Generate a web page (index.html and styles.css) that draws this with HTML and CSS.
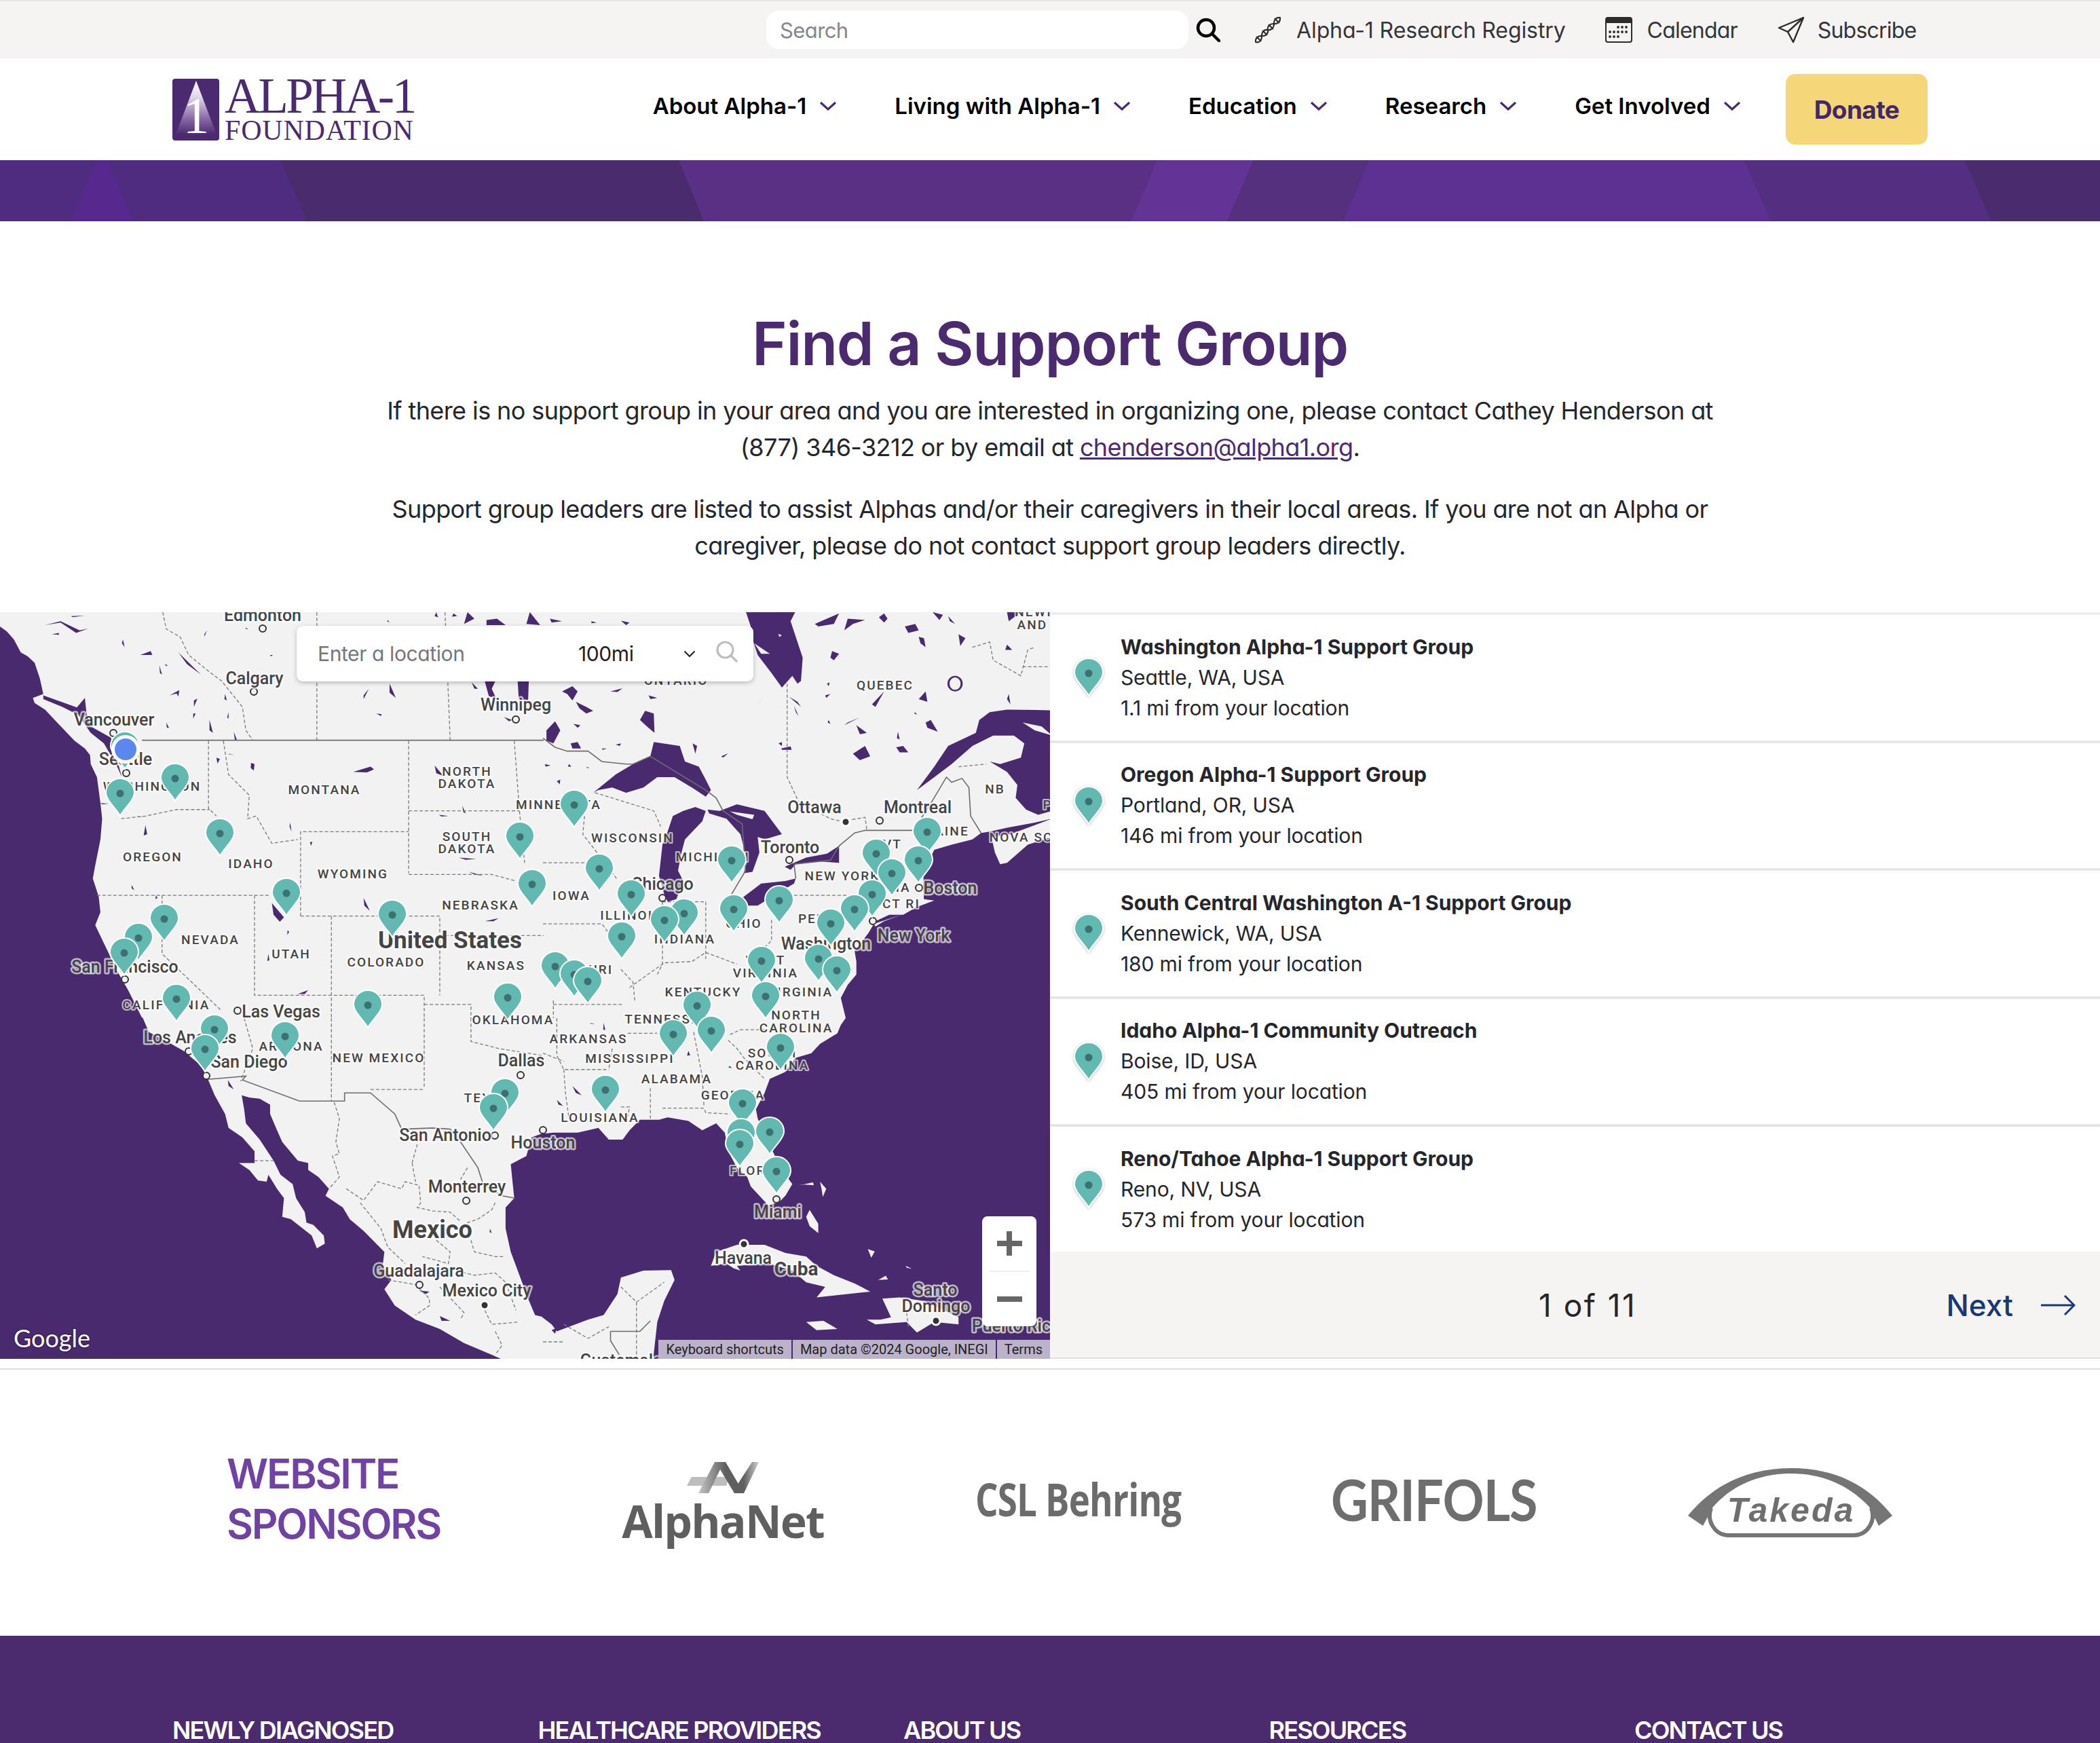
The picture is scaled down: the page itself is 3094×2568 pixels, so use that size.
FILE: index.html
```html
<!DOCTYPE html>
<html lang="en">
<head>
<meta charset="utf-8">
<title>Find a Support Group - Alpha-1 Foundation</title>
<link rel="stylesheet" href="styles.css">
</head>
<body>
<svg class="defs" width="0" height="0" aria-hidden="true">
  <defs>
    <linearGradient id="arrowfill" x1="0" y1="0" x2="0" y2="1">
      <stop offset="0" stop-color="#ffffff"/>
      <stop offset="0.3" stop-color="#e0d8ea"/>
      <stop offset="0.7" stop-color="#8a6aa8"/>
      <stop offset="1" stop-color="#4b2a72"/>
    </linearGradient>
    <linearGradient id="avfill" x1="0" y1="0" x2="1" y2="0">
      <stop offset="0" stop-color="#c4c4c4"/>
      <stop offset="0.45" stop-color="#5f5f5f"/>
      <stop offset="0.75" stop-color="#5f5f5f"/>
      <stop offset="1" stop-color="#cfcfcf"/>
    </linearGradient>
    <g id="pin">
      <path class="pin-body" d="M0,33 C-5,23 -21,10 -21,-1 A21,21 0 0 1 21,-1 C21,10 5,23 0,33 Z"/>
      <circle class="pin-dot" cx="0" cy="0" r="5.5"/>
    </g>
  </defs>
</svg>

<header class="topbar">
  <div class="searchbox"><span class="search-ph">Search</span></div>
  <svg class="ic-search" viewBox="0 0 36 36"><circle cx="15" cy="15" r="12"/><path d="M24 24 L34 34"/></svg>
  <a class="toplink link-registry">
    <svg class="ic-top ic-dna" viewBox="0 0 38 38"><path d="M2 36 C7 38 11 33 10.5 27.5 C10 22 14 18 19 19 C24 20 28 15 27.5 10.5 C27 5 31 1 36 2"/><path d="M2 36 C1 31 5 27 10.5 27.5 C16 28 20 24 19 19 C18 14 22 10 27.5 10.5 C33 11 37 7 36 2"/><path d="M3.500 29 L9 34.500 M12 20.500 L17.500 26 M20.500 12 L26 17.500 M29 3.500 L34.500 9"/></svg>
    <span>Alpha-1 Research Registry</span>
  </a>
  <a class="toplink link-calendar">
    <svg class="ic-cal" viewBox="0 0 40 38">
      <rect class="cal-frame" x="1" y="1" width="38" height="36" rx="3"/>
      <path class="cal-head" d="M1 4 a3 3 0 0 1 3-3 h32 a3 3 0 0 1 3 3 v5 h-38 Z"/>
      <g class="cal-dots"><circle cx="19" cy="15" r="1.9"/><circle cx="25" cy="15" r="1.9"/><circle cx="31" cy="15" r="1.9"/><circle cx="7" cy="22" r="1.9"/><circle cx="13" cy="22" r="1.9"/><circle cx="19" cy="22" r="1.9"/><circle cx="25" cy="22" r="1.9"/><circle cx="31" cy="22" r="1.9"/><circle cx="7" cy="29" r="1.9"/><circle cx="13" cy="29" r="1.9"/><circle cx="19" cy="29" r="1.9"/></g>
    </svg>
    <span>Calendar</span>
  </a>
  <a class="toplink link-subscribe">
    <svg class="ic-top" viewBox="0 0 40 40"><path d="M38 2 L2 17 L15 23 L23 38 Z"/><path d="M38 2 L15 23"/></svg>
    <span>Subscribe</span>
  </a>
</header>

<nav class="mainnav">
  <a class="logo">
    <svg class="logo-mark" viewBox="0 0 69 91">
      <rect class="logo-box" width="69" height="91" rx="4"/>
      <path d="M35 3 L65 82 H5 Z" fill="url(#arrowfill)"/>
      <text class="logo-one" x="35" y="80">1</text>
    </svg>
    <span class="logo-text"><span class="logo-a">ALPHA-1</span><span class="logo-f">FOUNDATION</span></span>
  </a>
  <div class="navitems">
    <a class="navitem">About Alpha-1<svg class="chev" viewBox="0 0 26 14"><path d="M2 2 L13 12 L24 2"/></svg></a>
    <a class="navitem">Living with Alpha-1<svg class="chev" viewBox="0 0 26 14"><path d="M2 2 L13 12 L24 2"/></svg></a>
    <a class="navitem">Education<svg class="chev" viewBox="0 0 26 14"><path d="M2 2 L13 12 L24 2"/></svg></a>
    <a class="navitem">Research<svg class="chev" viewBox="0 0 26 14"><path d="M2 2 L13 12 L24 2"/></svg></a>
    <a class="navitem">Get Involved<svg class="chev" viewBox="0 0 26 14"><path d="M2 2 L13 12 L24 2"/></svg></a>
  </div>
  <a class="donate">Donate</a>
</nav>

<div class="band">
  <svg class="band-svg" viewBox="0 0 3094 90" preserveAspectRatio="none">
    <rect class="b0" width="3094" height="90"/>
    <path class="b1" d="M0 0 H413 L453 90 H0 Z"/>
    <path class="b2" d="M142 0 H158 L196 90 H105 Z"/>
    <path class="b3" d="M1000 0 H1705 L1666 90 H1037 Z"/>
    <path class="b4" d="M1705 0 H1847 L1808 90 H1666 Z"/>
    <path class="b5" d="M1847 0 H2017 L1979 90 H1808 Z"/>
    <path class="b6" d="M2017 0 H2570 L2609 90 H1979 Z"/>
    <path class="b7" d="M2570 0 H2895 L2934 90 H2609 Z"/>
  </svg>
</div>

<section class="intro">
  <h1>Find a Support Group</h1>
  <p>If there is no support group in your area and you are interested in organizing one, please contact Cathey Henderson at<br>(877) 346-3212 or by email at <a class="mail">chenderson@alpha1.org</a>.</p>
  <p>Support group leaders are listed to assist Alphas and/or their caregivers in their local areas. If you are not an Alpha or<br>caregiver, please do not contact support group leaders directly.</p>
</section>

<section class="locator">
  <div class="map">
    <svg class="map-svg" viewBox="0 902 1547 1100" width="1547" height="1100">
      <rect class="land" x="0" y="902" width="1547" height="1100"/>

      <g transform="translate(0 900) scale(.5102 .3827)">
        <path class="water" d="M0,60 L20,80 40,110 60,160 80,175 100,200 115,260 125,320 95,335 100,355 130,380 165,430 215,500 245,530 260,555 262,590 280,640 290,740 295,800 290,880 275,980 268,1030 285,1100 290,1160 275,1210 300,1280 340,1390 370,1460 412,1572 L-2,1572 Z"/>
        <path class="water" d="M125,325 L222,372 245,335 250,395 262,445 320,488 352,640 335,590 300,510 262,470 225,400 180,370 125,340 Z"/>
        <path class="water" d="M205,20 L245,18 210,24Z M130,55 L175,40 230,75 255,68 220,85 175,45Z M150,90 L170,85 170,92Z M355,110 L360,140 352,125Z M405,170 L435,155 440,170Z M515,160 L580,245 540,205Z M460,210 L468,245 462,240Z M475,205 L485,210 480,212Z M590,90 L598,75 590,100Z M490,325 L518,305 515,330 510,318Z M560,345 L570,338 560,370Z M558,395 L565,395 558,415Z M480,430 L488,450 482,450Z M605,420 L615,470 605,460Z M660,390 L660,415 656,410Z M675,465 L685,500 678,495Z M650,320 L655,345 648,340Z M780,170 L788,170 782,175Z M712,65 L716,72 708,68Z M1050,325 L1065,300 1050,340Z M1125,280 L1143,335 1125,315Z M1087,395 L1102,398 1100,405Z M1362,275 L1380,300 1370,300Z M1400,272 L1430,272 1420,300 1432,335 1412,330Z M1495,272 L1527,272 1525,345 1498,340Z M1455,408 L1478,420 1470,425Z M1260,5 L1265,25 1255,20Z M1310,10 L1320,20 1305,22Z M1350,5 L1370,30 1340,50Z M1405,35 L1435,30 1460,55 1405,55Z M1530,5 L1560,55 1520,50Z M1120,35 L1125,45 1118,40Z M1020,620 L1070,600 1080,610 1060,622Z M625,565 L635,570 628,588Z M725,585 L735,590 733,615 724,605Z M660,550 L678,555 660,552Z M838,815 L842,850 836,830Z M895,890 L902,890 898,905Z M1255,595 L1280,635 1260,625Z M1268,785 L1295,790 1275,792Z M1335,750 L1345,780 1338,775Z M1325,950 L1375,955 1345,958Z M1355,1005 L1395,1020 1370,1015Z M1400,1195 L1440,1183 1425,1195Z M1050,1105 L1068,1155 1052,1135Z M420,825 L425,860 415,865Z M380,1055 L388,1075 380,1068Z M450,1095 L455,1105 449,1110Z M785,1125 L820,1180 808,1197 790,1170Z M830,1230 L835,1235 830,1248Z M775,1320 L778,1345 772,1348Z M860,1475 L890,1460 880,1475Z M290,740 L315,742 295,745Z M395,790 L415,795 400,793Z"/>
        <path class="dash" d="M470,5 L480,70 520,100 545,170 600,230 640,270 700,370 710,460 730,498 M915,5 V498 M1285,5 L1300,498 M602,500 V760 L625,790 M350,800 L420,790 510,765 605,765 M645,500 L660,630 720,710 715,800 740,790 785,895 860,880 M868,1175 V850 H1180 M868,1175 H1270 V1480 M280,1095 H780 M468,1095 V1320 L640,1540 M735,1095 V1480 H1225 V1570 M957,1175 V1570 M1180,500 V1010 M1180,770 H1500 M1485,500 L1500,770 1515,970 M1180,1015 H1420 L1490,1040 M1270,1250 H1570 M1225,1515 H1360 V1570"/>
        <path class="solid" d="M410,498 H1570"/>
      </g>

      <g transform="translate(800 900) scale(.5102 .3827)">
        <path class="water" d="M585,0 L730,0 715,40 750,180 745,270 735,280 720,250 690,295 660,240 620,170 608,120 600,60Z"/>
        <path class="land" d="M610,125 L655,165 630,165 Z M680,88 L690,95 682,100Z"/>
        <path class="water" d="M145,700 L210,630 260,590 310,560 320,505 395,520 410,580 450,600 470,650 485,690 470,715 430,680 380,640 330,640 290,680 240,700 200,680 160,690Z"/>
        <path class="water" d="M405,770 L440,755 470,770 460,810 410,880 400,930 390,1000 405,1040 385,1110 360,1120 350,1090 335,1020 345,900 360,850 375,790Z"/>
        <path class="water" d="M475,765 L510,770 560,745 640,770 690,860 640,880 620,870 625,930 605,1005 580,1010 590,960 570,860 530,800 480,780Z"/>
        <path class="land" d="M540,772 L610,785 605,802 560,785Z"/>
        <path class="water" d="M575,1105 L630,1050 700,1040 730,1030 725,1050 680,1085 620,1135 590,1135Z"/>
        <path class="water" d="M698,985 L760,950 820,935 855,905 855,970 800,965 730,975 715,997Z"/>
        <path class="water" d="M20,30 L55,40 25,45Z M140,40 L155,45 140,48Z M225,38 L250,45 240,55Z M195,310 L230,298 215,312Z M55,310 L85,290 100,310 85,345 70,320Z M95,350 L125,370 145,385 125,395 105,375Z M305,325 L330,335 310,340Z M280,420 L295,385 320,395 322,470 300,445Z M88,435 L108,440 100,450Z M10,460 L35,425 50,460 30,510 10,500Z M80,510 L100,505 110,530 85,530Z M5,590 L22,595 8,600Z M75,590 L82,600 72,600Z M125,600 L135,605 128,605Z M210,515 L225,510 222,520Z M170,530 L185,530 172,535Z M515,560 L535,548 520,565Z M432,510 L445,520 440,550Z M610,380 L643,315 625,350Z M710,330 L745,370 735,350Z M725,365 L738,405 730,390Z M680,510 L690,505 690,520Z M688,530 L715,522 718,535 690,535Z M40,655 L50,650 48,668Z M820,280 L828,275 825,290Z M815,325 L830,320 818,335Z M950,360 L985,310 960,370Z M825,420 L830,435 822,430Z M870,440 L915,410 880,430Z M895,550 L930,520 945,560 915,575Z M1020,525 L1040,520 1055,545 1030,545Z M835,155 L855,165 840,190 830,180Z M785,50 L855,10 840,50 795,60Z M870,75 L880,30 930,35 895,50Z M970,25 L985,10 995,30 985,45Z M1045,60 L1075,50 1085,75 1055,85Z M1125,5 L1155,15 1145,35Z M1170,20 L1190,50 1175,40Z M1085,100 L1100,105 1105,140 1090,125Z M1200,90 L1220,105 1205,135Z M1085,340 L1105,310 1110,350Z M1105,430 L1120,420 1140,465 1110,450Z M1075,390 L1080,400 1072,395Z M1340,130 L1355,150 1335,150Z M1345,320 L1350,360 1340,340Z M1340,5 L1380,5 1345,40Z M1025,465 L1030,495 1022,490Z M905,440 L935,470 915,475Z"/>
        <path class="water ring" d="M1168,280 A22,30 0 1 1 1212,280 A22,30 0 1 1 1168,280 Z M1174,280 A16,24 0 1 0 1206,280 A16,24 0 1 0 1174,280Z"/>
        <path class="water" d="M1572,385 L1340,380 1290,390 1260,420 1250,470 1170,520 1130,600 1080,690 1130,640 1180,590 1240,520 1300,480 1360,480 1390,510 1380,565 1320,590 1290,580 1340,620 1370,670 1365,720 1395,765 1430,785 1470,770 1572,770Z"/>
        <path class="water" d="M1572,800 L1470,800 1420,815 1340,835 1290,850 1265,855 1240,880 1180,900 1130,920 1100,1000 1098,1060 1100,1110 1130,1115 1080,1140 1040,1170 1000,1170 960,1195 940,1240 900,1310 905,1350 905,1400 880,1440 860,1490 875,1572 L1572,1572Z"/>
        <path class="land" d="M1295,870 L1350,860 1420,825 1470,800 1470,870 1400,900 1340,970 1320,975 1305,930Z"/>
        <path class="land" d="M955,1205 L1035,1170 985,1195 960,1215Z M1385,430 L1440,445 1470,480 1420,460Z"/>
        <path class="solid" d="M0,490 L35,525 70,540 130,540 170,580 240,590 260,590 310,560 470,690 500,720 520,770 575,820 585,1000 545,1090 M730,1030 L725,975 830,960 855,905 900,855 930,845 1070,845 L1125,730 1165,640 1180,660 1210,645 1230,680 1235,790 1265,855"/>
        <path class="dash" d="M705,280 V640 L740,740 830,800 860,810 930,795 935,840 M120,790 L115,860 150,920 215,1035 M150,700 L320,770 340,830 M0,970 H120 M0,1205 H170 L190,1240 M345,1120 H470 V1340 M345,1120 V1360 L330,1400 M250,1450 L350,1355 430,1350 470,1315 560,1360 M660,1190 V1270 L640,1295 M725,1095 H910 M1200,600 L1280,590 M1240,140 L1290,120 1300,190 1380,250 1400,150 1420,140 M1385,215 H1464 M225,1380 L260,1430 265,1500 M30,1500 V1568 M30,1515 H230"/>
      </g>

      <g transform="translate(0 1500) scale(.5102 .3444)">
        <path class="water" d="M412,-2 L430,60 470,90 530,140 590,215 600,260 620,330 650,410 660,470 700,510 735,570 735,620 690,620 720,650 745,695 770,700 775,670 800,730 820,770 815,850 840,860 900,930 915,985 938,965 935,930 905,885 885,875 880,830 855,770 845,710 810,670 790,610 750,520 710,450 705,390 698,330 720,340 750,345 780,370 780,410 800,480 815,530 860,610 890,620 890,650 920,680 950,730 940,760 990,810 1010,860 1050,910 1110,1000 1105,1060 1130,1120 1110,1160 1140,1230 1200,1290 1270,1330 1340,1390 1420,1440 1450,1460 L-2,1460 L-2,-2 Z"/>
        <path class="water" d="M1572,490 L1535,510 1520,590 1475,625 1480,700 1485,770 1460,810 1460,900 1475,1000 1500,1100 1525,1200 1545,1270 1572,1280 Z"/>
        <path class="water" d="M658,265 L675,305 660,290Z M1210,1165 L1240,1170 1230,1180Z M1415,900 L1420,920 1414,915Z M1270,1275 L1300,1295 1275,1295Z"/>
        <path class="solid" d="M600,262 L710,248 700,265 865,355 995,355 995,320 1070,320 1140,410 1160,475 1250,470 1300,475 1330,530 1380,640 1395,710 1450,760 1487,770"/>
        <path class="dash" d="M957,0 V355 M1225,0 V300 M1070,305 H1225 M705,0 L730,130 695,270 M965,360 L980,430 970,530 980,580 960,590 980,680 950,730 M1000,730 L1050,780 1090,700 1160,730 1170,700 1210,715 1215,790 1205,810 1250,825 1300,830 1330,870 M1190,620 L1205,540 M1190,620 L1200,700 M1350,640 L1330,690 M1430,790 L1420,820 1380,860 1340,880 M1040,790 L1100,900 1120,980 1170,1050 M1260,950 L1300,1000 1295,1050 1220,1020 M1360,950 L1370,1000 1430,1020 1455,1020 M1290,1070 L1370,1100 1430,1090 1460,1130 1490,1250 M1120,1120 L1200,1140 1240,1200 1240,1230 1200,1270 M1270,1150 L1340,1260 1330,1290 M1400,1250 L1420,1310 1500,1300 M1430,1340 L1450,1400 1430,1440 M735,610 H790 M1360,0 V100 L1440,130 1568,160"/>
      </g>

      <g transform="translate(800 1500) scale(.5102 .3444)">
        <path class="water" d="M875,-2 L860,30 850,65 800,110 775,150 730,170 700,230 655,260 640,320 615,390 620,430 660,560 690,650 720,710 700,760 680,790 650,800 625,760 600,720 590,680 560,640 535,570 525,490 500,450 460,480 420,440 360,425 335,435 280,435 250,480 230,520 190,520 160,470 100,490 30,490 -2,495 L-2,1280 25,1310 40,1340 130,1290 175,1270 215,1180 225,1110 290,1080 370,1078 380,1120 350,1210 330,1300 318,1460 L1572,1460 L1572,-2 Z"/>
        <path class="land" d="M485,1060 L500,1000 560,970 640,970 700,1005 760,1020 790,1060 840,1100 900,1135 945,1170 880,1180 790,1195 815,1150 760,1130 720,1080 650,1050 560,1060 570,1080 550,1070 530,1050Z M935,1290 L975,1290 1005,1280 980,1200 1030,1195 1100,1210 1200,1280 1200,1310 1130,1300 1080,1345 1050,1300 960,1310Z M760,1300 L810,1295 850,1330 790,1335Z M760,850 L770,820 795,880 795,920 770,890Z M740,715 L780,703 782,715 755,712Z M800,700 L818,730 808,765 805,735Z M968,1120 L990,1102 996,1118Z M938,988 L958,998 948,1025Z M1048,1060 L1065,1072 1050,1068Z"/>
        <path class="water" d="M85,290 L112,330 95,320Z M40,350 L58,375 45,370Z M420,140 L425,160 416,160Z M175,20 L180,50 174,50Z M135,20 L150,25 140,25Z M540,205 L545,215 535,210Z M25,1335 L40,1325 35,1350Z"/>
        <path class="dash" d="M40,0 V160 L60,220 H190 M60,220 L65,320 75,430 M310,300 V430 M200,130 L190,220 M345,385 H465 L470,405 540,410 M435,60 L460,250 465,380 M535,95 L560,130 580,170 640,260 M540,70 L570,50 H640 M245,65 H330 M0,150 L60,185 M225,380 H250 L245,420 M225,1150 L270,1215 350,1130 M270,1215 V1457 M0,1385 H60 M60,1310 L130,1370 190,1320 M1050,1260 L1055,1320"/>
        <path class="solid" d="M195,1340 H280 L310,1295 M195,1340 V1380 L220,1440"/>
      </g>

      <g class="rings">
        <circle cx="387" cy="926" r="5"/><circle cx="374" cy="1019" r="5"/><circle cx="167" cy="1080" r="5"/><circle cx="186" cy="1139" r="5"/><circle cx="760" cy="1060" r="5"/><circle cx="184" cy="1443" r="5"/><circle cx="350" cy="1489" r="5"/><circle cx="278" cy="1549" r="5"/><circle cx="304" cy="1585" r="5"/><circle cx="767" cy="1584" r="5"/><circle cx="729" cy="1673" r="5"/><circle cx="800" cy="1665" r="5"/><circle cx="687" cy="1769" r="5"/><circle cx="618" cy="1893" r="5"/><circle cx="976" cy="1323" r="5"/><circle cx="1163" cy="1267" r="5"/><circle cx="1296" cy="1209" r="5"/><circle cx="1354" cy="1308" r="5"/><circle cx="1286" cy="1357" r="5"/><circle cx="1144" cy="1767" r="5"/>
      </g>
      <g class="capitals">
        <circle cx="1246" cy="1211" r="6"/><circle cx="714" cy="1923" r="6"/><circle cx="1096" cy="1833" r="6"/><circle cx="1379" cy="1946" r="6"/>
      </g>

      <g class="states">
        <text x="224" y="1165">WASHINGTON</text><text x="478" y="1170">MONTANA</text><text x="688" y="1143">NORTH</text><text x="688" y="1161">DAKOTA</text><text x="225" y="1269">OREGON</text><text x="370" y="1279">IDAHO</text><text x="688" y="1239">SOUTH</text><text x="688" y="1257">DAKOTA</text><text x="520" y="1294">WYOMING</text><text x="708" y="1340">NEBRASKA</text><text x="310" y="1391">NEVADA</text><text x="429" y="1412">UTAH</text><text x="569" y="1424">COLORADO</text><text x="731" y="1429">KANSAS</text><text x="245" y="1487">CALIFORNIA</text><text x="756" y="1509">OKLAHOMA</text><text x="429" y="1548">ARIZONA</text><text x="558" y="1565">NEW MEXICO</text><text x="718" y="1624">TEXAS</text><text x="996" y="1009">ONTARIO</text><text x="1304" y="1016">QUEBEC</text><text x="1555" y="908">NEWFOUND</text><text x="1521" y="927">AND</text><text x="1466" y="1169">NB</text><text x="1550" y="1192">PE</text><text x="1393" y="1231">MAINE</text><text x="1530" y="1240">NOVA SCOTIA</text><text x="932" y="1241">WISCONSIN</text><text x="1050" y="1269">MICHIGAN</text><text x="823" y="1192">MINNESOTA</text><text x="842" y="1326">IOWA</text><text x="1241" y="1297">NEW YORK</text><text x="1315" y="1250">VT</text><text x="1325" y="1314">MA</text><text x="1328" y="1338">CT RI</text><text x="1205" y="1360">PENN</text><text x="930" y="1355">ILLINOIS</text><text x="1096" y="1367">OHIO</text><text x="1009" y="1390">INDIANA</text><text x="1128" y="1421">WEST</text><text x="1128" y="1440">VIRGINIA</text><text x="851" y="1435">MISSOURI</text><text x="1036" y="1468">KENTUCKY</text><text x="1179" y="1468">VIRGINIA</text><text x="982" y="1508">TENNESSEE</text><text x="1173" y="1502">NORTH</text><text x="1173" y="1521">CAROLINA</text><text x="867" y="1537">ARKANSAS</text><text x="928" y="1566">MISSISSIPPI</text><text x="997" y="1596">ALABAMA</text><text x="1080" y="1620">GEORGIA</text><text x="1138" y="1558">SOUTH</text><text x="1138" y="1576">CAROLINA</text><text x="884" y="1653">LOUISIANA</text><text x="1120" y="1731">FLORIDA</text>
      </g>
      <g class="cities">
        <text x="387" y="915">Edmonton</text><text x="375" y="1008">Calgary</text><text x="168" y="1069">Vancouver</text><text x="185" y="1127">Seattle</text><text x="760" y="1047">Winnipeg</text><text x="184" y="1433">San Francisco</text><text x="414" y="1499">Las Vegas</text><text x="280" y="1537">Los Angeles</text><text x="367" y="1573">San Diego</text><text x="768" y="1571">Dallas</text><text x="656" y="1681">San Antonio</text><text x="800" y="1692">Houston</text><text x="688" y="1757">Monterrey</text><text x="617" y="1881">Guadalajara</text><text x="717" y="1910">Mexico City</text><text x="1200" y="1198">Ottawa</text><text x="1352" y="1198">Montreal</text><text x="976" y="1311">Chicago</text><text x="1164" y="1257">Toronto</text><text x="1400" y="1317">Boston</text><text x="1346" y="1387">New York</text><text x="1217" y="1399">Washington</text><text x="1146" y="1794">Miami</text><text x="1095" y="1862">Havana</text><text x="1378" y="1909">Santo</text><text x="1379" y="1933">Domingo</text><text x="1497" y="1962">Puerto Rico</text><text x="915" y="2013">Guatemala</text>
      </g>
      <g class="countries">
        <text class="country-lg" x="663" y="1397">United States</text><text class="country-xl" x="637" y="1824">Mexico</text><text class="country-sm" x="1173" y="1879">Cuba</text>
      </g>

      <g class="pins">
        <use href="#pin" x="184" y="1100"/><use href="#pin" x="258" y="1147"/><use href="#pin" x="177" y="1169"/><use href="#pin" x="846" y="1186"/><use href="#pin" x="324" y="1228"/><use href="#pin" x="766" y="1233"/><use href="#pin" x="1366" y="1226"/><use href="#pin" x="1291" y="1258"/><use href="#pin" x="1353" y="1268"/><use href="#pin" x="1078" y="1268"/><use href="#pin" x="883" y="1280"/><use href="#pin" x="1314" y="1287"/><use href="#pin" x="784" y="1303"/><use href="#pin" x="422" y="1316"/><use href="#pin" x="930" y="1318"/><use href="#pin" x="1285" y="1318"/><use href="#pin" x="1148" y="1327"/><use href="#pin" x="1081" y="1340"/><use href="#pin" x="1259" y="1340"/><use href="#pin" x="1008" y="1346"/><use href="#pin" x="578" y="1348"/><use href="#pin" x="242" y="1354"/><use href="#pin" x="979" y="1356"/><use href="#pin" x="1224" y="1361"/><use href="#pin" x="916" y="1380"/><use href="#pin" x="204" y="1382"/><use href="#pin" x="183" y="1404"/><use href="#pin" x="1206" y="1413"/><use href="#pin" x="1122" y="1416"/><use href="#pin" x="818" y="1424"/><use href="#pin" x="1233" y="1430"/><use href="#pin" x="846" y="1436"/><use href="#pin" x="866" y="1446"/><use href="#pin" x="1128" y="1468"/><use href="#pin" x="748" y="1470"/><use href="#pin" x="260" y="1472"/><use href="#pin" x="542" y="1481"/><use href="#pin" x="1027" y="1482"/><use href="#pin" x="316" y="1517"/><use href="#pin" x="1048" y="1519"/><use href="#pin" x="992" y="1524"/><use href="#pin" x="420" y="1527"/><use href="#pin" x="1150" y="1544"/><use href="#pin" x="302" y="1546"/><use href="#pin" x="892" y="1606"/><use href="#pin" x="744" y="1611"/><use href="#pin" x="1094" y="1626"/><use href="#pin" x="727" y="1633"/><use href="#pin" x="1134" y="1668"/><use href="#pin" x="1092" y="1670"/><use href="#pin" x="1090" y="1686"/><use href="#pin" x="1144" y="1726"/>
      </g>
      <circle class="you-halo" cx="185" cy="1104" r="21"/>
      <circle class="you" cx="185" cy="1104" r="16"/>
      <text class="google" x="20" y="1985">Google</text>
    </svg>

    <div class="map-search">
      <span class="ms-input">Enter a location</span>
      <span class="ms-range">100mi</span>
      <svg class="ms-chev" viewBox="0 0 18 11"><path d="M1.5 1.5 L9 9 L16.5 1.5"/></svg>
      <svg class="ms-glass" viewBox="0 0 32 32"><circle cx="13.500" cy="13.500" r="11.500"/><path d="M22 22 L30 30"/></svg>
    </div>

    <div class="zoomctl">
      <button class="zoombtn"><span class="plus"></span></button>
      <span class="zoomsep"></span>
      <button class="zoombtn"><span class="minus"></span></button>
    </div>

    <div class="attrib">
      <span class="attr-item">Keyboard shortcuts</span>
      <span class="attr-item">Map data ©2024 Google, INEGI</span>
      <span class="attr-item">Terms</span>
    </div>
  </div>

  <div class="results">
    <ul class="reslist">
      <li class="res">
        <svg class="res-pin" viewBox="-23 -23 46 58"><use href="#pin"/></svg>
        <div class="res-text"><strong>Washington Alpha-1 Support Group</strong><span>Seattle, WA, USA</span><span>1.1 mi from your location</span></div>
      </li>
      <li class="res">
        <svg class="res-pin" viewBox="-23 -23 46 58"><use href="#pin"/></svg>
        <div class="res-text"><strong>Oregon Alpha-1 Support Group</strong><span>Portland, OR, USA</span><span>146 mi from your location</span></div>
      </li>
      <li class="res">
        <svg class="res-pin" viewBox="-23 -23 46 58"><use href="#pin"/></svg>
        <div class="res-text"><strong>South Central Washington A-1 Support Group</strong><span>Kennewick, WA, USA</span><span>180 mi from your location</span></div>
      </li>
      <li class="res">
        <svg class="res-pin" viewBox="-23 -23 46 58"><use href="#pin"/></svg>
        <div class="res-text"><strong>Idaho Alpha-1 Community Outreach</strong><span>Boise, ID, USA</span><span>405 mi from your location</span></div>
      </li>
      <li class="res">
        <svg class="res-pin" viewBox="-23 -23 46 58"><use href="#pin"/></svg>
        <div class="res-text"><strong>Reno/Tahoe Alpha-1 Support Group</strong><span>Reno, NV, USA</span><span>573 mi from your location</span></div>
      </li>
    </ul>
    <div class="pager">
      <span class="pager-count">1 of 11</span>
      <a class="pager-next">Next<svg class="arrow" viewBox="0 0 52 32"><path d="M1 16 H50 M36 2 L50 16 L36 30"/></svg></a>
    </div>
  </div>
</section>

<section class="sponsors">
  <h2 class="sp-title">WEBSITE<br>SPONSORS</h2>
  <div class="sp-cell sp-alphanet">
    <svg class="av" viewBox="0 0 106 46">
      <path class="av-bar" d="M7 22 H62 L58 35 H0 Z"/>
      <path d="M17 46 L41 0 H57 L84 46 H70 L49 11 L32 46 Z M66 24 L74 34 L96 0 H106 L84 46 H76 Z" fill="url(#avfill)"/>
    </svg>
    <span class="an-text">AlphaNet</span>
  </div>
  <div class="sp-cell"><span class="csl">CSL Behring</span></div>
  <div class="sp-cell"><span class="grifols">GRIFOLS</span></div>
  <div class="sp-cell">
    <svg class="takeda" viewBox="2485 2163 301 102">
      <path class="tk-fill" d="M2485 2233 C2520 2190 2570 2163 2637 2163 C2704 2163 2752 2190 2786 2233 L2766 2248 L2752 2220 C2720 2186 2680 2171 2637 2171 C2594 2171 2552 2186 2522 2220 L2507 2248 Z"/>
      <path class="tk-line" d="M2519 2222 C2512 2240 2524 2262 2545 2262 H2729 C2750 2262 2762 2240 2755 2222"/>
      <text class="tk-text" x="2637" y="2242">Takeda</text>
    </svg>
  </div>
</section>

<footer class="footer">
  <a class="f-head">NEWLY DIAGNOSED</a>
  <a class="f-head">HEALTHCARE PROVIDERS</a>
  <a class="f-head">ABOUT US</a>
  <a class="f-head">RESOURCES</a>
  <a class="f-head">CONTACT US</a>
</footer>
</body>
</html>
```

FILE: styles.css
```css
* { box-sizing: border-box; }
html, body { margin: 0; padding: 0; }
body {
  width: 3094px;
  height: 2568px;
  overflow: hidden;
  background: #fff;
  color: #24262c;
  font-family: Inter, "Noto Sans", sans-serif;
  font-feature-settings: "cv11" 1;
}
a { color: inherit; text-decoration: none; }
.defs { position: absolute; }

/* top utility bar */
.topbar {
  height: 86px;
  border-top: 2px solid #e6e6e4;
  background: #f5f4f2;
  display: flex;
  align-items: center;
  padding: 0 0 0 1129px;
  font-size: 32px;
  color: #33353a;
}
.searchbox {
  flex: none;
  width: 622px;
  height: 56px;
  background: #fff;
  border-radius: 18px;
  display: flex;
  align-items: center;
  padding-left: 20px;
}
.search-ph { color: #85878a; font-size: 31px; letter-spacing: -0.6px; }
.ic-search { flex: none; width: 36px; height: 36px; margin-left: 11px; fill: none; stroke: #000; stroke-width: 4.5; stroke-linecap: round; }
.toplink { display: flex; align-items: center; white-space: nowrap; flex: none; }
.link-registry { margin-left: 50px; gap: 22px; letter-spacing: -0.1px; }
.link-calendar { margin-left: 58px; gap: 22px; letter-spacing: -0.8px; }
.link-subscribe { margin-left: 59px; gap: 19px; letter-spacing: -0.8px; }
.ic-top { width: 40px; height: 40px; fill: none; stroke: #2c2c2c; stroke-width: 2.400; stroke-linejoin: round; }
.ic-dna { stroke-width: 2; stroke-linecap: round; }
.ic-cal { width: 40px; height: 38px; }
.cal-frame { fill: none; stroke: #2c2c2c; stroke-width: 2; }
.cal-head { fill: #2c2c2c; }
.cal-dots { fill: #2c2c2c; }

/* main nav */
.mainnav {
  height: 150px;
  background: #fff;
  display: flex;
  align-items: center;
  padding: 0 254px;
}
.logo { display: flex; gap: 8px; height: 91px; }
.logo-mark { width: 69px; height: 91px; display: block; }
.logo-box { fill: #4b2a72; }
.logo-one { font-family: "Liberation Serif", serif; font-size: 77px; fill: #fff; text-anchor: middle; }
.logo-text { display: flex; flex-direction: column; color: #4b2a72; font-family: "Liberation Serif", serif; }
.logo-a { font-size: 73px; line-height: 52px; letter-spacing: -3.5px; white-space: nowrap; }
.logo-f { font-size: 42px; line-height: 36px; margin-top: 6px; letter-spacing: 0.8px; white-space: nowrap; }
.navitems { display: flex; gap: 85px; margin-left: 351px; }
.navitem { display: flex; align-items: center; gap: 19px; font-size: 33px; font-weight: 600; letter-spacing: 0; color: #000; font-feature-settings: normal; white-space: nowrap; margin-top: -10px; }
.chev { width: 26px; height: 14px; fill: none; stroke: #4b2a72; stroke-width: 3.2; }
.donate {
  margin-left: auto;
  width: 209px;
  height: 104px;
  border-radius: 14px;
  background: #f5d678;
  color: #432768;
  font-size: 37px;
  font-weight: 700;
  letter-spacing: -0.6px;
  font-feature-settings: normal;
  display: flex;
  align-items: center;
  justify-content: center;
}

/* purple band */
.band { height: 90px; }
.band-svg { display: block; width: 100%; height: 90px; }
.b0 { fill: #4a2b6d; }
.b1 { fill: #4f2c80; }
.b2 { fill: #57298e; }
.b3 { fill: #5a3085; }
.b4 { fill: #633494; }
.b5 { fill: #55307f; }
.b6 { fill: #5d3192; }
.b7 { fill: #542e80; }

/* intro */
.intro { height: 576px; padding-top: 130px; text-align: center; }
.intro h1 { margin: 0 0 22px; font-size: 88px; line-height: 100px; font-weight: 600; color: #4b2a70; letter-spacing: -1.3px; font-feature-settings: normal; }
.intro p { margin: 0 0 37px; font-size: 36px; line-height: 54px; letter-spacing: -0.6px; color: #24262c; }
.mail { color: #4b2a70; text-decoration: underline; }

/* locator */
.locator { display: grid; grid-template-columns: 1547px 1fr; height: 1100px; }
.map { position: relative; width: 1547px; height: 1100px; overflow: hidden; }
.map-svg { display: block; }
.land { fill: #f2f2f2; }
.water { fill: #4a2a6e; }
.ring { fill-rule: evenodd; }
.dash { fill: none; stroke: #7a7a7a; stroke-width: 1.3; stroke-dasharray: 5 3; vector-effect: non-scaling-stroke; }
.solid { fill: none; stroke: #6c6c6c; stroke-width: 1.6; vector-effect: non-scaling-stroke; }
.rings circle { fill: #f2f2f2; stroke: #333; stroke-width: 2; }
.capitals circle { fill: #333; stroke: #fff; stroke-width: 3; }
.states text, .cities text, .countries text { font-family: Roboto, sans-serif; text-anchor: middle; paint-order: stroke; stroke: rgba(255,255,255,.68); stroke-linejoin: round; font-feature-settings: normal; }
.states text { font-size: 19px; font-weight: 500; letter-spacing: 2.1px; fill: #444; stroke-width: 4px; }
.cities text { font-size: 25px; font-weight: 500; fill: #444; stroke-width: 5px; }
.countries text { font-weight: 700; fill: #444; stroke-width: 5px; }
.country-lg { font-size: 35px; }
.country-xl { font-size: 36px; }
.country-sm { font-size: 28px; }
.pin-body { fill: #62b9b2; stroke: #fff; stroke-width: 2; }
.pin-dot { fill: #3e6f71; }
.you-halo { fill: #fff; }
.you { fill: #5b88ee; }
.google { font-family: Lato, sans-serif; font-size: 36px; font-weight: 400; fill: #fff; paint-order: stroke; stroke: #3a2156; stroke-width: 3px; font-feature-settings: normal; }

.map-search {
  position: absolute;
  left: 437px;
  top: 20px;
  width: 673px;
  height: 82px;
  background: #fff;
  border-radius: 9px;
  box-shadow: 0 2px 6px rgba(0,0,0,.25);
  display: flex;
  align-items: center;
  padding-left: 31px;
  font-size: 30px;
  letter-spacing: -0.4px;
}
.ms-input { color: #75777b; width: 384px; }
.ms-range { color: #1f2024; width: 155px; }
.ms-chev { width: 18px; height: 11px; fill: none; stroke: #222; stroke-width: 2; }
.ms-glass { width: 32px; height: 32px; margin-left: 30px; margin-top: -6px; fill: none; stroke: #bdbdbd; stroke-width: 3.2; stroke-linecap: round; }

.zoomctl {
  position: absolute;
  left: 1447px;
  top: 890px;
  width: 80px;
  height: 162px;
  background: #fff;
  border-radius: 8px;
  display: flex;
  flex-direction: column;
  align-items: center;
}
.zoombtn { flex: 1; width: 100%; border: 0; padding: 0; background: none; display: flex; align-items: center; justify-content: center; }
.zoomsep { width: 60px; height: 2px; background: #eee; }
.minus { display: block; width: 37px; height: 8px; background: #666; }
.plus { display: block; width: 37px; height: 36px; background: linear-gradient(#666,#666) center/37px 8px no-repeat, linear-gradient(#666,#666) center/8px 36px no-repeat; }

.attrib {
  position: absolute;
  right: 0;
  bottom: 0;
  height: 28px;
  display: flex;
  font-family: Roboto, sans-serif;
  font-size: 20px;
  line-height: 28px;
  font-feature-settings: normal;
  color: #222;
  gap: 2px;
}
.attr-item { background: #bdb2cb; padding: 0 11px; white-space: nowrap; }

/* results list */
.results { display: flex; flex-direction: column; height: 1100px; border-top: 4px solid #f0efed; }
.reslist { list-style: none; margin: 0; padding: 0; }
.res {
  height: 188.5px;
  display: flex;
  align-items: center;
  padding-left: 34px;
  border-bottom: 4px solid #e6e6e4;
  background: #fff;
}
.res:last-child { height: 184px; border-bottom: 0; box-shadow: 0 2px 8px rgba(0,0,0,.08); position: relative; }
.res-pin { width: 46px; height: 58px; flex: none; filter: drop-shadow(0 1px 2px rgba(0,0,0,.25)); }
.res-text { display: flex; flex-direction: column; margin-left: 24px; font-size: 30px; line-height: 45px; letter-spacing: -0.15px; color: #24262c; }
.res-text strong { font-weight: 700; letter-spacing: 0; }
.pager {
  flex: 1;
  background: #f5f4f2;
  border-bottom: 2px solid #dde1e4;
  position: relative;
  display: flex;
  align-items: center;
  justify-content: flex-end;
  padding: 2px 36px 0 0;
  font-size: 46px;
}
.pager-count { position: absolute; left: 720px; letter-spacing: 2.5px; font-feature-settings: normal; }
.pager-next { display: flex; align-items: center; gap: 40px; color: #17397a; font-weight: 500; font-size: 44px; letter-spacing: 0; font-feature-settings: normal; }
.arrow { width: 52px; height: 32px; fill: none; stroke: #17397a; stroke-width: 3; }

/* sponsors */
.sponsors {
  margin-top: 14px;
  height: 394px;
  border-top: 2px solid #dde1e4;
  display: grid;
  grid-template-columns: 469px repeat(4, 524px);
  padding-left: 334px;
  align-items: center;
}
.sp-title { margin: -12px 0 0; font-size: 60px; line-height: 74px; font-weight: 600; color: #6f42a3; letter-spacing: -2.2px; font-feature-settings: normal; }
.sp-cell { display: flex; flex-direction: column; align-items: center; }
.sp-alphanet { gap: 6px; }
.av { width: 106px; height: 46px; }
.av-bar { fill: #bdbdbd; }
.an-text { font-size: 66px; line-height: 68px; font-weight: 700; color: #5f5f5f; letter-spacing: -1.8px; font-feature-settings: normal; font-family: "Open Sans", sans-serif; }
.csl { font-family: "Open Sans", sans-serif; font-size: 66px; font-weight: 700; color: #6b6b6b; letter-spacing: -1px; white-space: nowrap; font-feature-settings: normal; transform: translateY(-6px) scaleX(.8); }
.grifols { font-family: Lato, sans-serif; font-size: 84px; font-weight: 700; color: #6e6e6e; letter-spacing: -1px; font-feature-settings: normal; transform: translateY(-6px) scaleX(.9); }
.takeda { width: 301px; height: 102px; display: block; }
.tk-fill { fill: #757575; }
.tk-line { fill: none; stroke: #757575; stroke-width: 6; }
.tk-text { font-family: "Liberation Sans", sans-serif; font-size: 50px; font-weight: 700; font-style: italic; letter-spacing: 3px; fill: #6f6f6f; text-anchor: middle; font-feature-settings: normal; }

/* footer */
.footer {
  height: 158px;
  background: #4b2a6e;
  display: grid;
  grid-template-columns: repeat(5, 538.500px);
  padding: 117px 0 0 254px;
  color: #fff;
  font-size: 36px;
  line-height: 44px;
  font-weight: 600;
  letter-spacing: -1.8px;
  font-feature-settings: normal;
}
```
